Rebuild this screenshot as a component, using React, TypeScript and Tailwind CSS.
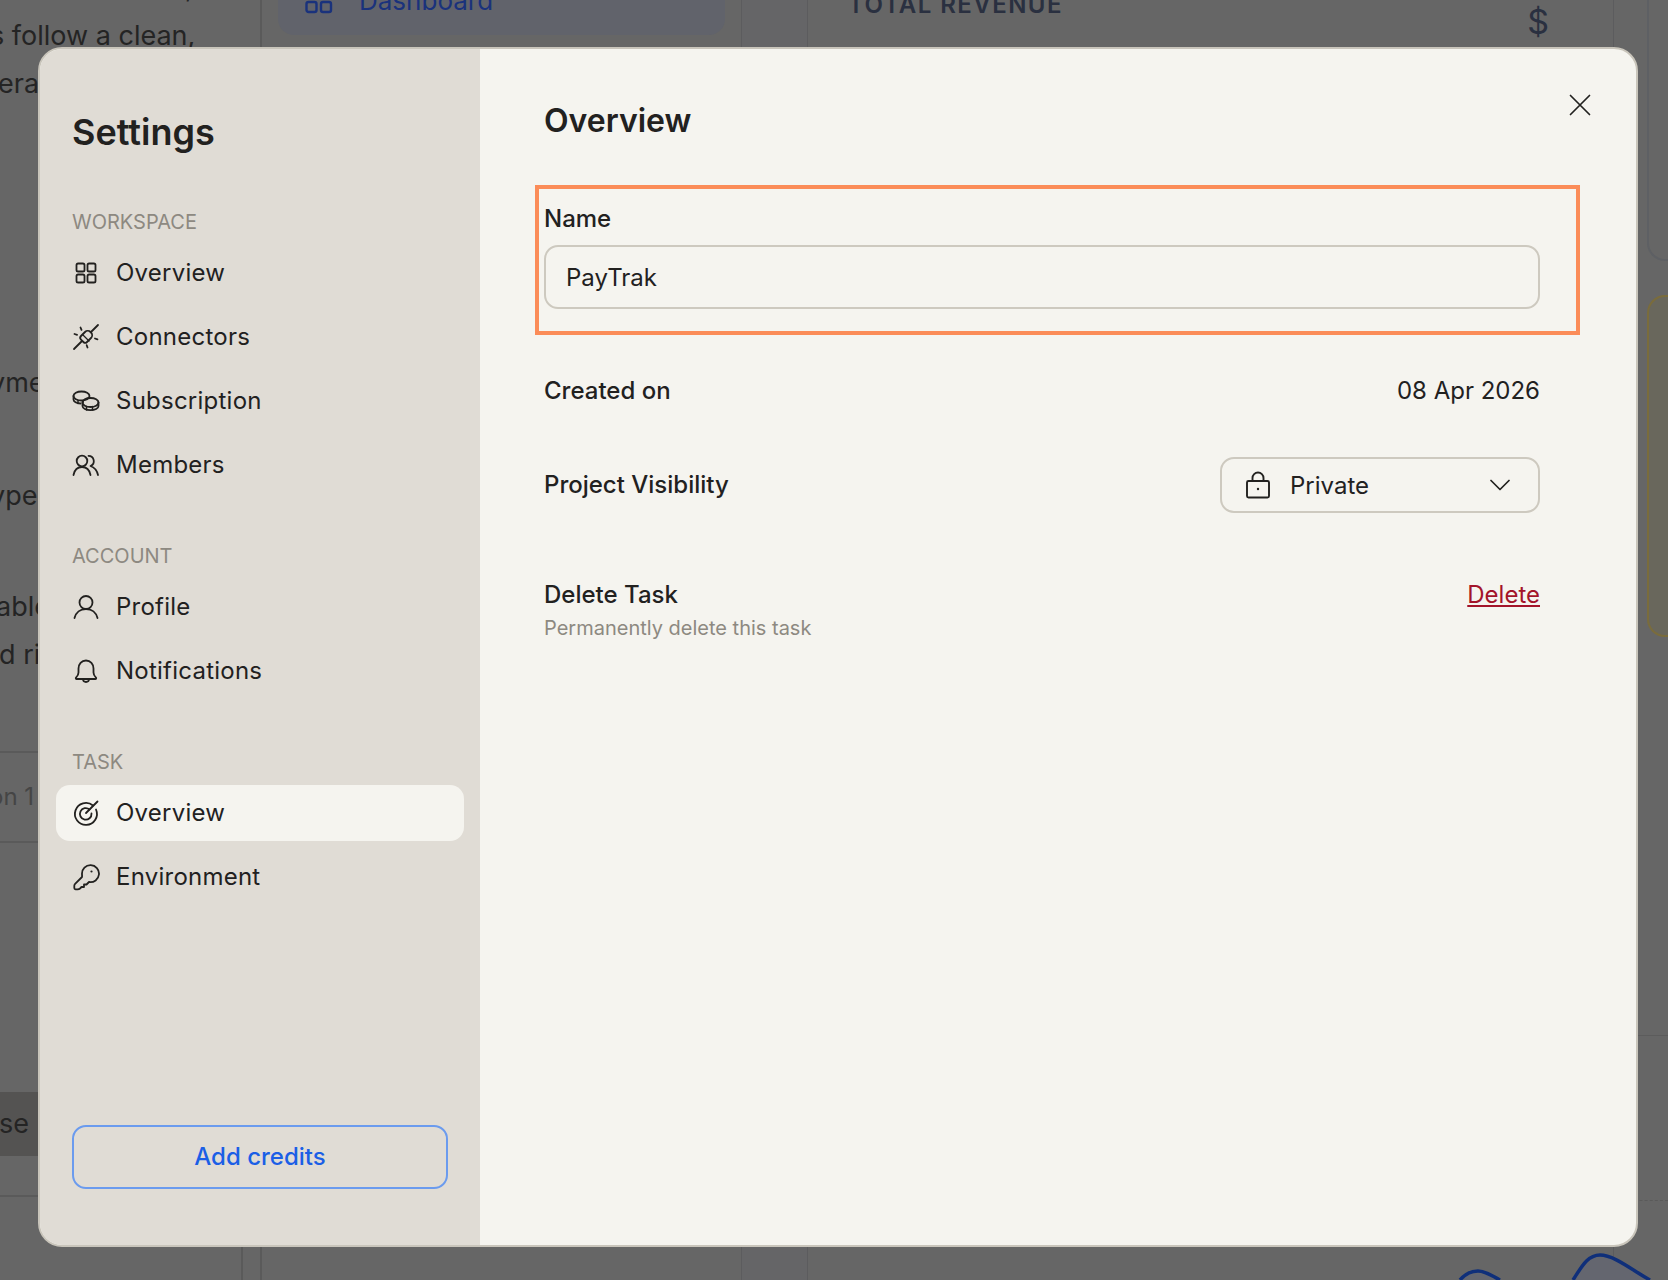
import type { ReactNode } from "react";

function Icon({ children, size = 28 }: { children: ReactNode; size?: number }) {
  return (
    <svg width={size} height={size} viewBox="0 0 28 28" fill="none" stroke="currentColor" strokeWidth={1.8} strokeLinecap="round" strokeLinejoin="round" className="shrink-0">
      {children}
    </svg>
  );
}

const GridIcon = () => (
  <Icon>
    <rect x="4.500" y="4.500" width="8" height="8" rx="1.600" />
    <rect x="15.500" y="4.500" width="8" height="8" rx="1.600" />
    <rect x="4.500" y="15.500" width="8" height="8" rx="1.600" />
    <rect x="15.500" y="15.500" width="8" height="8" rx="1.600" />
  </Icon>
);

const PlugIcon = () => (
  <Icon>
    <path d="M2 26l7.500-7.500M19 9l7-7" />
    <path d="M9 13l4-4c1.500-1.500 4-1.500 5.500 0l.5.500c1.500 1.500 1.500 4 0 5.500l-4 4c-1 1-2.600 1-3.600 0l-2.400-2.400c-1-1-1-2.600 0-3.600z" />
    <path d="M10.500 11.500l6.500 6.500" strokeWidth={1.300} />
    <path d="M8.500 4.500l1 2.300M2.500 11l2.600.8M23 15.500l2.500.8M15.500 24.500l-.8-2.300" />
  </Icon>
);

const CoinsIcon = () => (
  <Icon>
    <ellipse cx="9.500" cy="9" rx="8" ry="4.500" />
    <path d="M1.500 9v3.500c0 2 3 3.800 7 4" />
    <ellipse cx="18.500" cy="15.500" rx="8" ry="4.500" />
    <path d="M10.500 15.500v3.500c0 2.300 3.600 4.200 8 4.200s8-1.900 8-4.200v-3.500" />
    <path d="M14.500 19.500v3.500M20.500 19.500v3.500M6 13.500v3M11 13.500v2" strokeWidth={1.500} />
  </Icon>
);

const UsersIcon = () => (
  <Icon>
    <circle cx="10" cy="10" r="5.300" />
    <path d="M1.500 24c1-5 4-8 8.500-8s7.500 3 8.500 8" />
    <path d="M16.500 4.800a5.300 5.300 0 0 1 2 10.200c3.500 1.200 6.500 4.500 7.500 9" />
  </Icon>
);

const UserIcon = () => (
  <Icon>
    <circle cx="14" cy="9.500" r="6.500" />
    <path d="M2.500 25c1.300-5.500 5.800-9 11.500-9s10.200 3.500 11.500 9" />
  </Icon>
);

const BellIcon = () => (
  <Icon>
    <path d="M14 3.500c-4.500 0-7.500 3.500-7.500 8v4c0 2-1.300 4-2.500 5.200-.5.600-.1 1.300.6 1.300h18.800c.7 0 1.100-.7.600-1.300-1.200-1.200-2.500-3.200-2.500-5.200v-4c0-4.500-3-8-7.500-8z" />
    <path d="M11 22.500c.2 1.600 1.500 2.500 3 2.500s2.800-.9 3-2.500" />
  </Icon>
);

const TargetIcon = () => (
  <Icon>
    <path d="M21 6.500A11 11 0 1 0 24 10.500" />
    <path d="M17.500 10.500A5.800 5.800 0 1 0 19.500 14.500" />
    <path d="M14 14L25.500 2.500" />
  </Icon>
);

const KeyIcon = () => (
  <Icon>
    <path d="M10 11a8.500 8.500 0 1 1 7 8l-2.500 2.500h-2.500V24h-2.500l-1.500 1.500c-.8.700-1.500.8-2.500.8H3.500c-.8 0-1.200-.5-1.200-1.200v-2.300c0-.8.200-1.400.8-2L10 14c.2-.5 0-2 0-3z" />
    <circle cx="19.500" cy="8.500" r="1.100" fill="currentColor" stroke="none" />
  </Icon>
);

function NavItem({ icon, label, active }: { icon: ReactNode; label: string; active?: boolean }) {
  return (
    <div className={`flex h-14 items-center gap-4 rounded-[14px] px-4 text-[24px] text-[#22211f] tracking-[0.01em] ${active ? "bg-[#f5f4ef]" : ""}`}>
      {icon}
      <span>{label}</span>
    </div>
  );
}

function SectionLabel({ children, className }: { children: ReactNode; className: string }) {
  return <div className={`h-7 px-4 text-[20px] leading-7 text-[#8d8981] uppercase ${className}`}>{children}</div>;
}

function Background() {
  return (
    <div className="flex h-full text-[#242424]">
      {/* left text column */}
      <div className="flex w-[262px] shrink-0 flex-col overflow-hidden border-r-2 border-[#5a5a5a] text-[27px] leading-[48px] whitespace-nowrap">
        <div className="-mt-[36px] h-12 pl-[185px]">,</div>
        <div className="-ml-[10px] h-12">s follow a clean,</div>
        <div className="-ml-[2px] h-12">era</div>
        <div className="mt-[251px] -ml-[10px] h-12">yme</div>
        <div className="mt-[65px] -ml-[10px] h-12">ype</div>
        <div className="mt-[63px] -ml-[4px] h-12">able</div>
        <div className="-ml-[1px] h-12">d ri</div>
        <div className="mt-[72px] flex h-[92px] items-center border-y-2 border-[#5a5a5a] text-[24px] text-[#454545]">
          <span className="-ml-[11px]">on 1</span>
        </div>
        <div className="mt-[249px] flex h-16 items-center bg-[#545352]">
          <span className="-ml-[1px]">se</span>
        </div>
        <div className="mt-[39px] border-t-2 border-[#5a5a5a]" />
        <div className="mr-[17px] flex-1 border-r-2 border-[#5a5a5a]" />
      </div>

      {/* nav column */}
      <div className="w-[480px] shrink-0 border-r border-[#5c5c5e] px-4">
        <div className="-mt-[20px] flex h-[55px] items-center gap-[26px] rounded-b-[16px] bg-[#61636b] px-[27px] pb-[15px] text-[26px] text-[#1a327c]">
          <svg width="28" height="28" viewBox="0 0 28 28" fill="none" stroke="currentColor" strokeWidth={2.400} className="shrink-0">
            <rect x="1.500" y="1.500" width="10" height="10" rx="2" />
            <rect x="16" y="1.500" width="10" height="10" rx="2" />
            <rect x="1.500" y="16" width="10" height="10" rx="2" />
            <rect x="16" y="16" width="10" height="10" rx="2" />
          </svg>
          <span>Dashboard</span>
        </div>
      </div>
      <div className="w-[66px] shrink-0 border-r border-[#5c5c5e] bg-[#656567]" />

      {/* revenue column */}
      <div className="w-[806px] shrink-0 border-r border-[#5c5c5e] px-[40px]">
        <div className="flex items-start justify-between pr-[24px]">
          <div className="-mt-[7px] text-[24px] leading-[24px] font-semibold tracking-[0.06em] text-[#2a3040]">TOTAL REVENUE</div>
          <div className="mt-[4px] text-[34px] leading-[36px] text-[#2a3040]">$</div>
        </div>
      </div>

      {/* right column */}
      <div className="flex flex-1 flex-col">
        <div className="-mt-[20px] ml-[33px] h-[281px] rounded-bl-[18px] border-b-2 border-l-2 border-[#5e6064]" />
        <div className="mt-[34px] ml-[33px] h-[342px] rounded-l-[18px] border-y-2 border-l-2 border-[#7a6c3c] bg-[#69675c]" />
        <div className="mt-[398px] border-t border-[#5c5c5c]" />
        <div className="mt-[164px] border-t border-dashed border-[#5a5a5a]" />
      </div>
    </div>
  );
}

export default function App() {
  return (
    <div className="relative h-[1280px] w-[1668px] overflow-hidden bg-[#666666] font-['Inter',sans-serif]">
      <Background />

      {/* revenue chart poking out under the dialog */}
      <svg className="absolute bottom-0 left-[1440px]" width="228" height="34" viewBox="0 0 228 34" fill="none">
        <path d="M20 34C26 27 31 25 38 25C46 25 52 30 60 34H133C141 22 147 9 160 9C174 9 192 24 210 34Z" fill="#64666f" />
        <path d="M20 34C26 27 31 25 38 25C46 25 52 30 60 34" stroke="#0f2f7a" strokeWidth="3.500" />
        <path d="M133 34C141 22 147 9 160 9C174 9 192 24 210 34" stroke="#0f2f7a" strokeWidth="3.500" />
      </svg>

      {/* dialog */}
      <div className="absolute top-[47px] left-[38px] flex h-[1200px] w-[1600px] overflow-hidden rounded-[24px] border-2 border-[#c9c5bb] bg-[#f5f4ef]">
        <aside className="flex w-[440px] shrink-0 flex-col bg-[#e0dcd5] px-4 pt-[61px] pb-[56px]">
          <div className="h-11 px-4 text-[36px] leading-[44px] font-semibold text-[#22211f]">Settings</div>

          <SectionLabel className="mt-[54px]">Workspace</SectionLabel>
          <div className="mt-[9px] flex flex-col gap-2">
            <NavItem icon={<GridIcon />} label="Overview" />
            <NavItem icon={<PlugIcon />} label="Connectors" />
            <NavItem icon={<CoinsIcon />} label="Subscription" />
            <NavItem icon={<UsersIcon />} label="Members" />
          </div>

          <SectionLabel className="mt-[49px]">Account</SectionLabel>
          <div className="mt-[9px] flex flex-col gap-2">
            <NavItem icon={<UserIcon />} label="Profile" />
            <NavItem icon={<BellIcon />} label="Notifications" />
          </div>

          <SectionLabel className="mt-[49px]">Task</SectionLabel>
          <div className="mt-[9px] flex flex-col gap-2">
            <NavItem icon={<TargetIcon />} label="Overview" active />
            <NavItem icon={<KeyIcon />} label="Environment" />
          </div>

          <button className="mx-4 mt-auto h-16 rounded-[14px] border-2 border-[#6b9bee] text-[24px] font-medium text-[#1b5fe6]">Add credits</button>
        </aside>

        <main className="relative flex-1 pt-[50px] pr-[96px] pl-[64px] text-[24px] text-[#22211f]">
          <button className="absolute top-[44px] right-[44px] text-[#22211f]">
            <svg width="24" height="24" viewBox="0 0 24 24" fill="none" stroke="currentColor" strokeWidth={1.700} strokeLinecap="round">
              <path d="M2.500 2.500l19 19M21.500 2.500l-19 19" />
            </svg>
          </button>

          <h2 className="h-11 text-[32px] leading-[44px] font-semibold">Overview</h2>

          <div className="mt-[42px] -mr-[40px] -ml-[9px] border-4 border-[#fb8c58] pt-[14px] pr-[36px] pb-[22px] pl-[5px]">
            <div className="h-8 leading-8 font-medium">Name</div>
            <input
              readOnly
              value="PayTrak"
              className="mt-[10px] h-16 w-full rounded-[14px] border-2 border-[#cdc9bf] bg-transparent px-5 text-[24px] outline-none"
            />
          </div>

          <div className="mt-[40px] flex h-8 items-center justify-between leading-8">
            <span className="font-medium">Created on</span>
            <span>08 Apr 2026</span>
          </div>

          <div className="mt-[50px] flex h-14 items-center justify-between">
            <span className="font-medium">Project Visibility</span>
            <div className="flex h-14 w-[320px] items-center rounded-[14px] border-2 border-[#cdc9bf] pr-[28px] pl-[23px]">
              <svg width="26" height="28" viewBox="0 0 26 28" fill="none" stroke="currentColor" strokeWidth={1.900} strokeLinejoin="round" className="shrink-0">
                <rect x="2" y="10" width="22" height="16.500" rx="1.500" />
                <path d="M7.500 10V7a5.500 5.500 0 0 1 11 0v3" />
                <circle cx="13" cy="18" r="1.200" fill="currentColor" stroke="none" />
              </svg>
              <span className="ml-[19px] flex-1 pt-[1px]">Private</span>
              <svg width="20" height="12" viewBox="0 0 20 12" fill="none" stroke="currentColor" strokeWidth={1.700} strokeLinecap="round" strokeLinejoin="round">
                <path d="M1 1.500l9 9 9-9" />
              </svg>
            </div>
          </div>

          <div className="mt-[66px] flex h-8 items-center justify-between leading-8">
            <span className="font-medium">Delete Task</span>
            <a className="text-[#a3142a] underline underline-offset-2">Delete</a>
          </div>
          <div className="mt-[3px] h-7 text-[20px] leading-7 text-[#8d8981]">Permanently delete this task</div>
        </main>
      </div>
    </div>
  );
}
